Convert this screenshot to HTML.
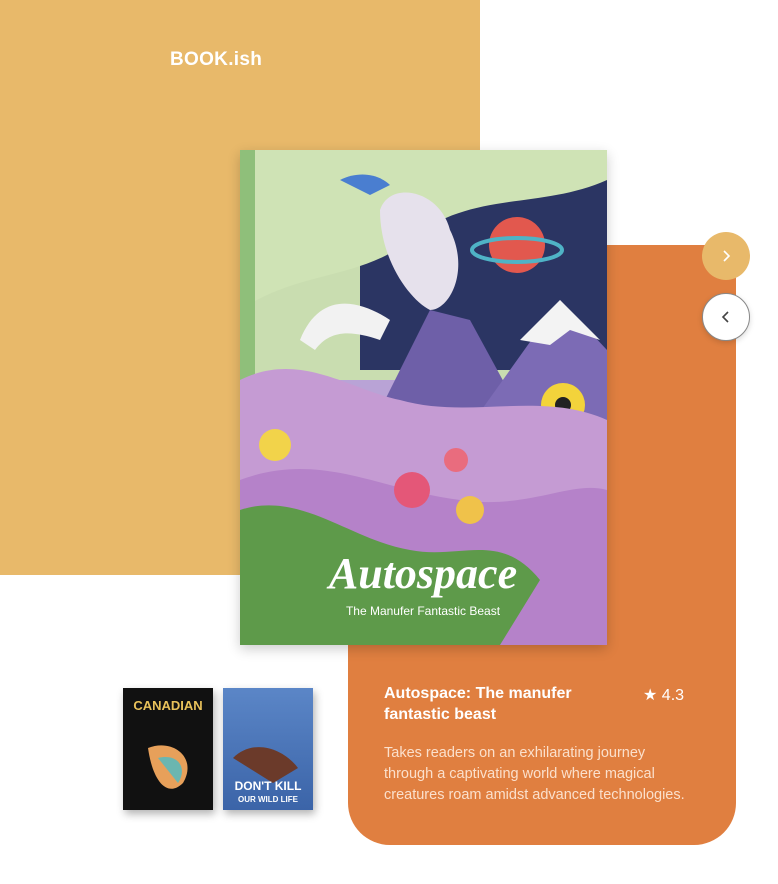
<!DOCTYPE html>
<html><head><meta charset="utf-8"><style>
body{margin:0;width:778px;height:884px;background:#fff;position:relative;overflow:hidden;font-family:"Liberation Sans",sans-serif}
.y{position:absolute;left:0;top:0;width:480px;height:575px;background:#E8B96A}
.logo{position:absolute;left:170px;top:49px;color:#fff;font-weight:bold;font-size:19px;letter-spacing:0.3px}
.o{position:absolute;left:348px;top:245px;width:388px;height:600px;background:#E07F40;border-radius:0 0 42px 42px}
.book{position:absolute;left:240px;top:150px;width:367px;height:495px;overflow:hidden;box-shadow:0 4px 12px rgba(0,0,0,.2)}
.t{position:absolute;left:384px;top:683px;width:250px;color:#fff;font-weight:bold;font-size:16px;line-height:21px}
.r{position:absolute;left:643px;top:685px;color:#fff;font-size:16px}
.d{position:absolute;left:384px;top:743px;white-space:nowrap;color:#FBE0CC;font-size:14.5px;line-height:21px}
.b1,.b2{position:absolute;width:48px;height:48px;border-radius:50%;box-sizing:border-box;display:flex;align-items:center;justify-content:center}
.b1{left:702px;top:232px;background:#E8B96A}
.b2{left:702px;top:293px;background:#fff;border:1.5px solid #888;box-shadow:0 2px 6px rgba(0,0,0,.15)}
.th{position:absolute;top:688px;width:90px;height:122px;box-shadow:2px 4px 8px rgba(0,0,0,.3)}
</style></head><body>
<div class="y"></div>
<div class="logo">BOOK.ish</div>
<div class="o"></div>
<div class="book">
<svg width="367" height="495" viewBox="0 0 367 495">
<rect width="367" height="495" fill="#B9A3D6"/>
<rect width="367" height="230" fill="#C9DDB0"/>
<path d="M120 30 L367 30 L367 220 L120 220Z" fill="#2B3563"/>
<path d="M0 0 H367 V30 C300 60 230 40 170 90 C120 130 60 120 0 160Z" fill="#CFE3B5"/>
<path d="M0 0 H15 V495 H0Z" fill="#8FBF7A"/>
<path d="M130 280 L190 160 L230 170 L290 280Z" fill="#6E5FA8"/>
<path d="M220 290 L320 150 L367 200 L367 300Z" fill="#7C6BB5"/>
<path d="M280 190 L320 150 L360 190 L330 180 L310 195Z" fill="#F3F3F3"/>
<path d="M140 60 C150 30 200 40 210 80 C230 120 210 160 190 160 C170 150 140 110 140 60Z" fill="#E6E1EC"/>
<circle cx="277" cy="95" r="28" fill="#E2584E"/>
<ellipse cx="277" cy="100" rx="45" ry="12" fill="none" stroke="#4FB3C6" stroke-width="4"/>
<circle cx="323" cy="255" r="22" fill="#F3D33B"/><circle cx="323" cy="255" r="8" fill="#222"/>
<path d="M0 230 C60 200 110 240 160 250 C230 270 300 240 367 270 V495 H0Z" fill="#C59BD3"/>
<path d="M0 330 C80 300 140 340 220 350 C290 360 330 330 367 340 V495 H0Z" fill="#B582C9"/>
<path d="M0 360 C60 340 110 390 170 400 C220 410 260 380 300 430 L260 495 H0Z" fill="#5E9A4A"/>
<circle cx="35" cy="295" r="16" fill="#F2D34A"/><circle cx="172" cy="340" r="18" fill="#E45778"/>
<circle cx="230" cy="360" r="14" fill="#F0C24A"/><circle cx="216" cy="310" r="12" fill="#E96C7E"/>
<path d="M60 190 C80 140 120 150 150 170 L140 190 C110 180 90 180 75 200Z" fill="#F2F2F2"/>
<path d="M100 30 C120 20 140 25 150 35 L130 45Z" fill="#4A7ED0"/>
<text x="183" y="438" text-anchor="middle" font-family="Liberation Serif,serif" font-style="italic" font-weight="bold" font-size="44" fill="#fff">Autospace</text>
<text x="183" y="465" text-anchor="middle" font-size="12" fill="#fff" font-family="Liberation Sans,sans-serif">The Manufer Fantastic Beast</text>
</svg></div>
<div class="b1"><svg width="16" height="16" viewBox="0 0 16 16"><path d="M6 3 L11 8 L6 13" fill="none" stroke="#fff" stroke-width="1.6"/></svg></div>
<div class="b2"><svg width="16" height="16" viewBox="0 0 16 16"><path d="M10 3 L5 8 L10 13" fill="none" stroke="#444" stroke-width="1.6"/></svg></div>
<div class="t">Autospace: The manufer fantastic beast</div>
<div class="r">★ 4.3</div>
<div class="d">Takes readers on an exhilarating journey<br>through a captivating world where magical<br>creatures roam amidst advanced technologies.</div>
<div class="th" style="left:123px;background:#111">
<svg width="90" height="122"><text x="45" y="22" text-anchor="middle" font-size="13" font-weight="bold" fill="#E9C25B" font-family="Liberation Sans">CANADIAN</text><path d="M25 60 C50 50 75 70 60 95 C45 110 30 95 25 60Z" fill="#E7A05A"/><path d="M35 70 C55 65 65 80 55 95Z" fill="#6BB6B0"/></svg></div>
<div class="th" style="left:223px;background:linear-gradient(#5B86C7,#3B64A8)">
<svg width="90" height="122"><path d="M10 70 C30 50 60 60 75 80 L50 95 Z" fill="#6B3A2A"/><text x="45" y="102" text-anchor="middle" font-size="12" font-weight="bold" fill="#fff" font-family="Liberation Sans">DON'T KILL</text><text x="45" y="114" text-anchor="middle" font-size="8" font-weight="bold" fill="#fff" font-family="Liberation Sans">OUR WILD LIFE</text></svg></div>
</body></html>
